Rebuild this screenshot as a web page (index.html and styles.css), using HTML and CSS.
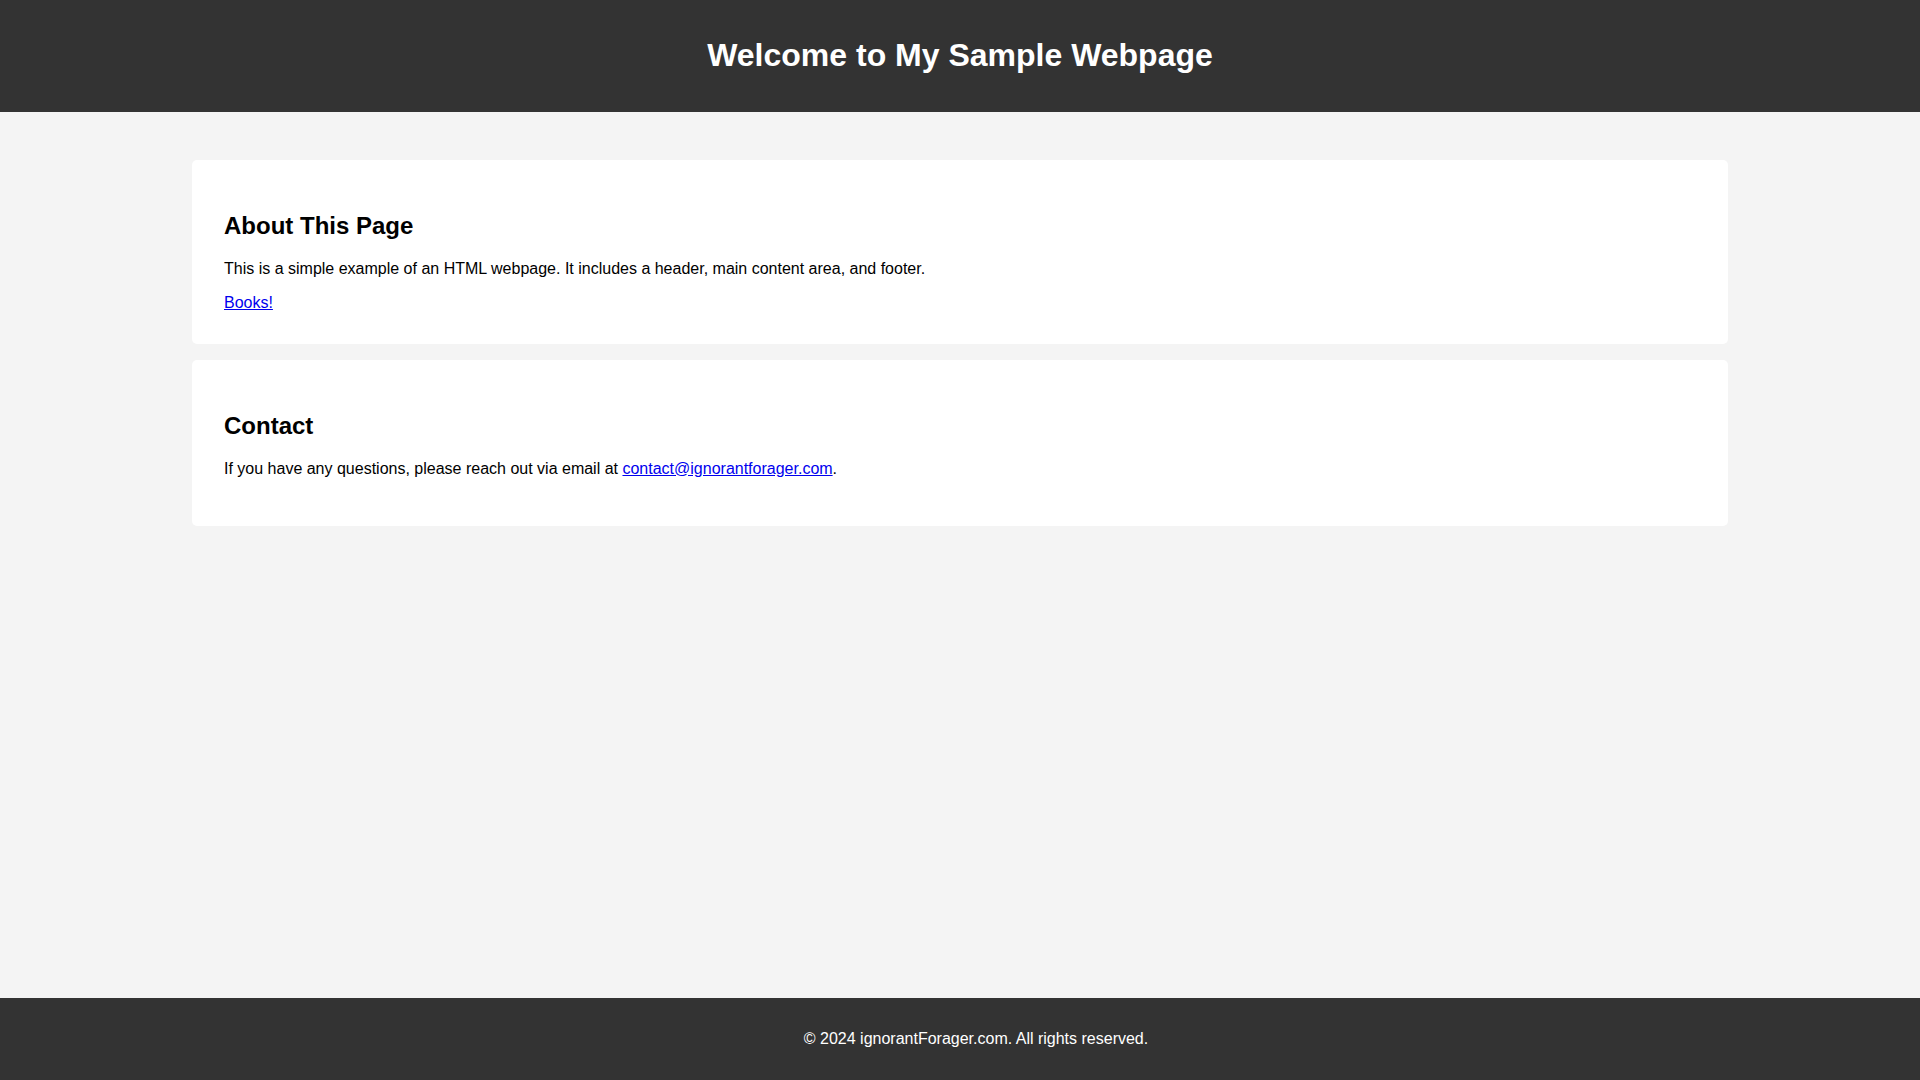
FILE: index.html
```html
<!DOCTYPE html>
<html lang="en">
<head>
<meta charset="utf-8">
<title>My Sample Webpage</title>
<link rel="stylesheet" href="styles.css">
</head>
<body>
<header class="site-header">
  <h1 class="site-title">Welcome to My Sample Webpage</h1>
</header>
<main class="content">
  <section class="card">
    <h2 class="card-title">About This Page</h2>
    <p class="card-text">This is a simple example of an HTML webpage. It includes a header, main content area, and footer.</p>
    <a class="link" href="#">Books!</a>
  </section>
  <section class="card">
    <h2 class="card-title">Contact</h2>
    <p class="card-text">If you have any questions, please reach out via email at <a class="link" href="#">contact@ignorantforager.com</a>.</p>
  </section>
</main>
<footer class="site-footer">
  <p class="footer-text">&copy; 2024 ignorantForager.com. All rights reserved.</p>
</footer>
</body>
</html>
```

FILE: styles.css
```css
html, body {
  margin: 0;
  padding: 0;
}
body {
  font-family: "Liberation Sans", Arial, sans-serif;
  background: #f4f4f4;
  color: #000;
  min-height: 100vh;
  display: flex;
  flex-direction: column;
  overflow: hidden;
}
.site-header {
  background: #333;
  color: #fff;
  text-align: center;
  padding: 16px 0;
}
.site-title {
  font-size: 32px;
  font-weight: bold;
  margin: 21.44px 0;
}
.content {
  flex: 1;
  width: 80%;
  margin: 48px auto 0;
}
.card {
  background: #fff;
  border-radius: 5px;
  padding: 32px;
  margin-bottom: 16px;
}
.card-title {
  font-size: 24px;
  font-weight: bold;
  margin: 19.92px 0;
}
.card-text {
  font-size: 16px;
  margin: 16px 0;
}
.link {
  color: #0000ee;
  text-decoration: underline;
}
.site-footer {
  background: #333;
  color: #fff;
  text-align: center;
  padding: 16px 0 16px 32px;
}
.footer-text {
  margin: 16px 0;
  font-size: 16px;
}
```
